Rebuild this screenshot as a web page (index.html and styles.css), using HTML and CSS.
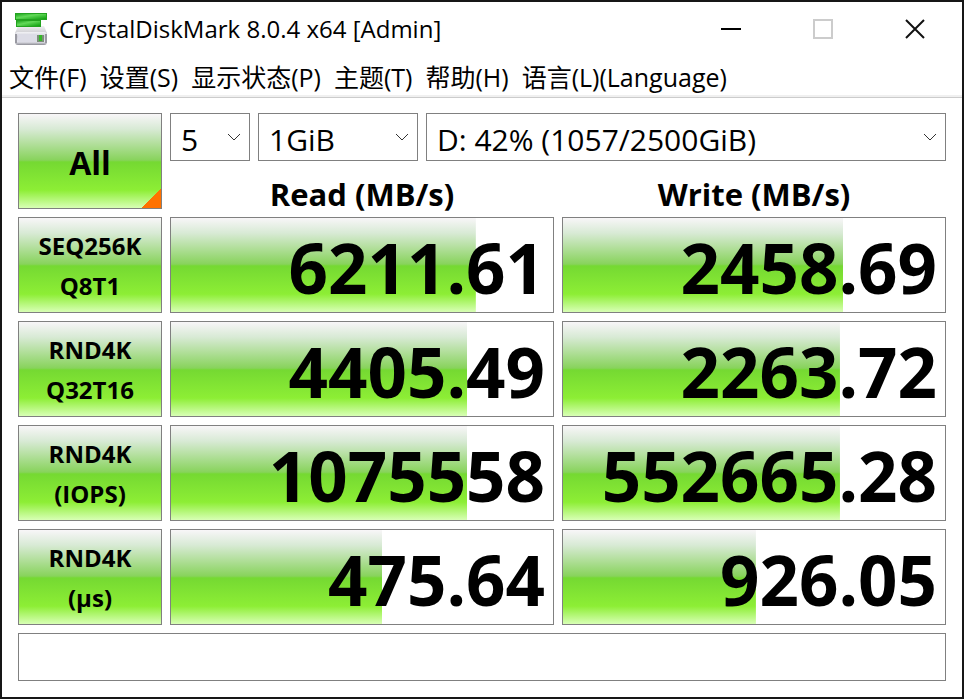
FILE: index.html
```html
<!DOCTYPE html>
<html lang="zh-CN">
<head>
<meta charset="utf-8">
<meta name="viewport" content="width=device-width, initial-scale=1">
<title>CrystalDiskMark 8.0.4 x64 [Admin]</title>
<link rel="stylesheet" href="styles.css">
</head>
<body>
<div class="window">
  <header class="titlebar">
    <svg class="app-icon" viewBox="0 0 32 32" aria-hidden="true">
      <defs>
        <linearGradient id="leaf" x1="0" y1="0" x2="1" y2="1">
          <stop offset="0" stop-color="#1fa51f"/><stop offset=".4" stop-color="#62d958"/><stop offset="1" stop-color="#0fa00f"/>
        </linearGradient>
        <linearGradient id="disk" x1="0" y1="0" x2="0" y2="1">
          <stop offset="0" stop-color="#f2f2f6"/><stop offset=".35" stop-color="#cfcfd8"/><stop offset=".75" stop-color="#e6e6ee"/><stop offset="1" stop-color="#8c8c94"/>
        </linearGradient>
        <linearGradient id="lid" x1="0" y1="0" x2="0" y2="1">
          <stop offset="0" stop-color="#f0f0f2"/><stop offset="1" stop-color="#c0c0c4"/>
        </linearGradient>
      </defs>
      <path d="M3 13H29L32 20V23H0V20Z" fill="url(#lid)"/>
      <path d="M0 0H32V7H26V14H1V7H0Z" fill="#23a31f"/>
      <path d="M1 1H31V6H1Z" fill="url(#leaf)"/>
      <path d="M2 8H25V13H2Z" fill="url(#leaf)"/>
      <rect x="0" y="19" width="32" height="13" rx="3" fill="url(#disk)"/>
      <path d="M1 21V30M31 21V30" stroke="#9a9aa2" stroke-width="2"/>
      <rect x="3" y="21" width="19" height="8" rx="1" fill="#dcdce6"/>
      <rect x="22" y="22" width="7" height="7" fill="#7b8f78"/>
      <rect x="24" y="22" width="3" height="6" fill="#35b828"/>
    </svg>
    <h1 class="title">CrystalDiskMark 8.0.4 x64 [Admin]</h1>
    <div class="caption">
      <button class="caption-button" type="button" aria-label="Minimize"><svg viewBox="0 0 20 20"><path d="M0 10H20" stroke="#000" stroke-width="2"/></svg></button>
      <button class="caption-button" type="button" aria-label="Maximize" disabled><svg viewBox="0 0 20 20"><path d="M1 1H19V19H1Z" fill="none" stroke="#ccc" stroke-width="2"/></svg></button>
      <button class="caption-button" type="button" aria-label="Close"><svg viewBox="0 0 20 20"><path d="M1 1L19 19M19 1L1 19" stroke="#111" stroke-width="2"/></svg></button>
    </div>
  </header>
  <nav class="menubar">
    <button type="button">文件(F)</button>
    <button type="button">设置(S)</button>
    <button type="button">显示状态(P)</button>
    <button type="button">主题(T)</button>
    <button type="button">帮助(H)</button>
    <button type="button">语言(L)(Language)</button>
  </nav>
  <main class="content">
    <table class="board">
      <colgroup><col class="col-test"><col><col></colgroup>
      <thead>
        <tr class="row-options">
          <td rowspan="2"><button class="run run-all" type="button">All</button></td>
          <td colspan="2">
            <div class="options">
              <div class="pick pick-count">
                <select aria-label="Test count"><option>5</option></select>
                <svg viewBox="0 0 14 8" aria-hidden="true"><path d="M1 1L7 7L13 1"/></svg>
              </div>
              <div class="pick pick-size">
                <select aria-label="Test size"><option>1GiB</option></select>
                <svg viewBox="0 0 14 8" aria-hidden="true"><path d="M1 1L7 7L13 1"/></svg>
              </div>
              <div class="pick pick-drive">
                <select aria-label="Drive"><option>D: 42% (1057/2500GiB)</option></select>
                <svg viewBox="0 0 14 8" aria-hidden="true"><path d="M1 1L7 7L13 1"/></svg>
              </div>
            </div>
          </td>
        </tr>
        <tr class="row-heads"><th scope="col">Read (MB/s)</th><th scope="col">Write (MB/s)</th></tr>
      </thead>
      <tbody>
        <tr>
          <th scope="row"><button class="run" type="button">SEQ256K<br>Q8T1</button></th>
          <td><div class="meter" style="--fill: 79.8%">6211.61</div></td>
          <td><div class="meter" style="--fill: 73.4%">2458.69</div></td>
        </tr>
        <tr>
          <th scope="row"><button class="run" type="button">RND4K<br>Q32T16</button></th>
          <td><div class="meter" style="--fill: 77.5%">4405.49</div></td>
          <td><div class="meter" style="--fill: 72.5%">2263.72</div></td>
        </tr>
        <tr>
          <th scope="row"><button class="run" type="button">RND4K<br>(IOPS)</button></th>
          <td><div class="meter" style="--fill: 77.5%">1075558</div></td>
          <td><div class="meter" style="--fill: 72.5%">552665.28</div></td>
        </tr>
        <tr>
          <th scope="row"><button class="run" type="button">RND4K<br>(μs)</button></th>
          <td><div class="meter" style="--fill: 55.3%">475.64</div></td>
          <td><div class="meter" style="--fill: 50.5%">926.05</div></td>
        </tr>
      </tbody>
    </table>
    <input class="comment" type="text" aria-label="Comment">
  </main>
</div>
</body>
</html>
```
FILE: styles.css
```css
* { box-sizing: border-box; }

:root {
  --frame: #161616;
  --line: #808080;
  --green: linear-gradient(#f8f6f8 0%, #d8ead5 16%, #88d35c 49%, #75d932 51%, #8dee35 81%, #d8ffb5 100%);
}

body {
  margin: 0;
  background: #fff;
  color: #000;
  font-family: "Open Sans", "Noto Sans", "Noto Sans CJK SC", sans-serif;
}

button, select, input { font: inherit; color: inherit; }

.window {
  min-height: 100vh;
  border: 2px solid var(--frame);
}

.titlebar {
  display: flex;
  align-items: center;
  height: 54px;
  padding: 0 1px 0 13px;
}

.app-icon { width: 32px; height: 32px; margin-right: 12px; }

.title {
  margin: 0;
  font-size: 24px;
  font-weight: 400;
  line-height: 32px;
}

.caption { display: flex; margin-left: auto; }

.caption-button {
  display: grid;
  place-items: center;
  width: 92px;
  height: 54px;
  padding: 0;
  border: 0;
  background: none;
}

.caption-button svg { width: 20px; height: 20px; }

.menubar {
  display: flex;
  gap: 13px;
  height: 42px;
  padding: 0 7px;
  border-bottom: 1px solid #ccc;
  box-shadow: inset 0 -2px #f0f0f0;
}

.menubar button {
  height: 40px;
  padding: 2px 0 0;
  border: 0;
  background: none;
  font-size: 25px;
  line-height: 38px;
  white-space: nowrap;
}

.content { padding: 15px 16px 16px; }

.board {
  width: calc(100% + 16px);
  margin: -8px;
  table-layout: fixed;
  border-collapse: separate;
  border-spacing: 8px;
}

.board td, .board th { padding: 0; }

.col-test { width: 144px; }
.row-options { height: 48px; }
.row-heads { height: 40px; }

.board .row-heads th {
  padding-top: 10px;
  font-size: 31px;
  font-weight: 700;
  line-height: 30px;
}

.run {
  display: block;
  width: 100%;
  height: 96px;
  padding: 2px 0 0;
  border: 1px solid var(--line);
  background: var(--green);
  font-size: 24px;
  font-weight: 700;
  line-height: 40px;
}

.run-all {
  padding-top: 4px;
  background: linear-gradient(135deg, transparent 50%, #ff7200 50%) right bottom / 19px 19px no-repeat, var(--green);
  font-size: 32px;
}

.options { display: flex; gap: 8px; }

.pick { position: relative; height: 48px; }
.pick-count { width: 80px; }
.pick-size { width: 160px; }
.pick-drive { flex: 1; }

.pick select {
  width: 100%;
  height: 100%;
  padding: 4px 32px 0 10px;
  border: 1px solid var(--line);
  border-radius: 0;
  background: #fff;
  appearance: none;
  font-size: 30px;
  font-weight: 400;
}

.pick svg {
  position: absolute;
  top: 20px;
  right: 9px;
  width: 14px;
  height: 8px;
  fill: none;
  stroke: #333;
  pointer-events: none;
}

.meter {
  height: 96px;
  padding: 2px 8px 0 0;
  border: 1px solid var(--line);
  background: var(--green) left top / var(--fill) 100% no-repeat;
  font-size: 69px;
  font-weight: 700;
  line-height: 94px;
  text-align: right;
}

.comment {
  display: block;
  width: 100%;
  height: 48px;
  margin-top: 8px;
  padding: 0 8px;
  border: 1px solid var(--line);
  font-size: 24px;
}
```
